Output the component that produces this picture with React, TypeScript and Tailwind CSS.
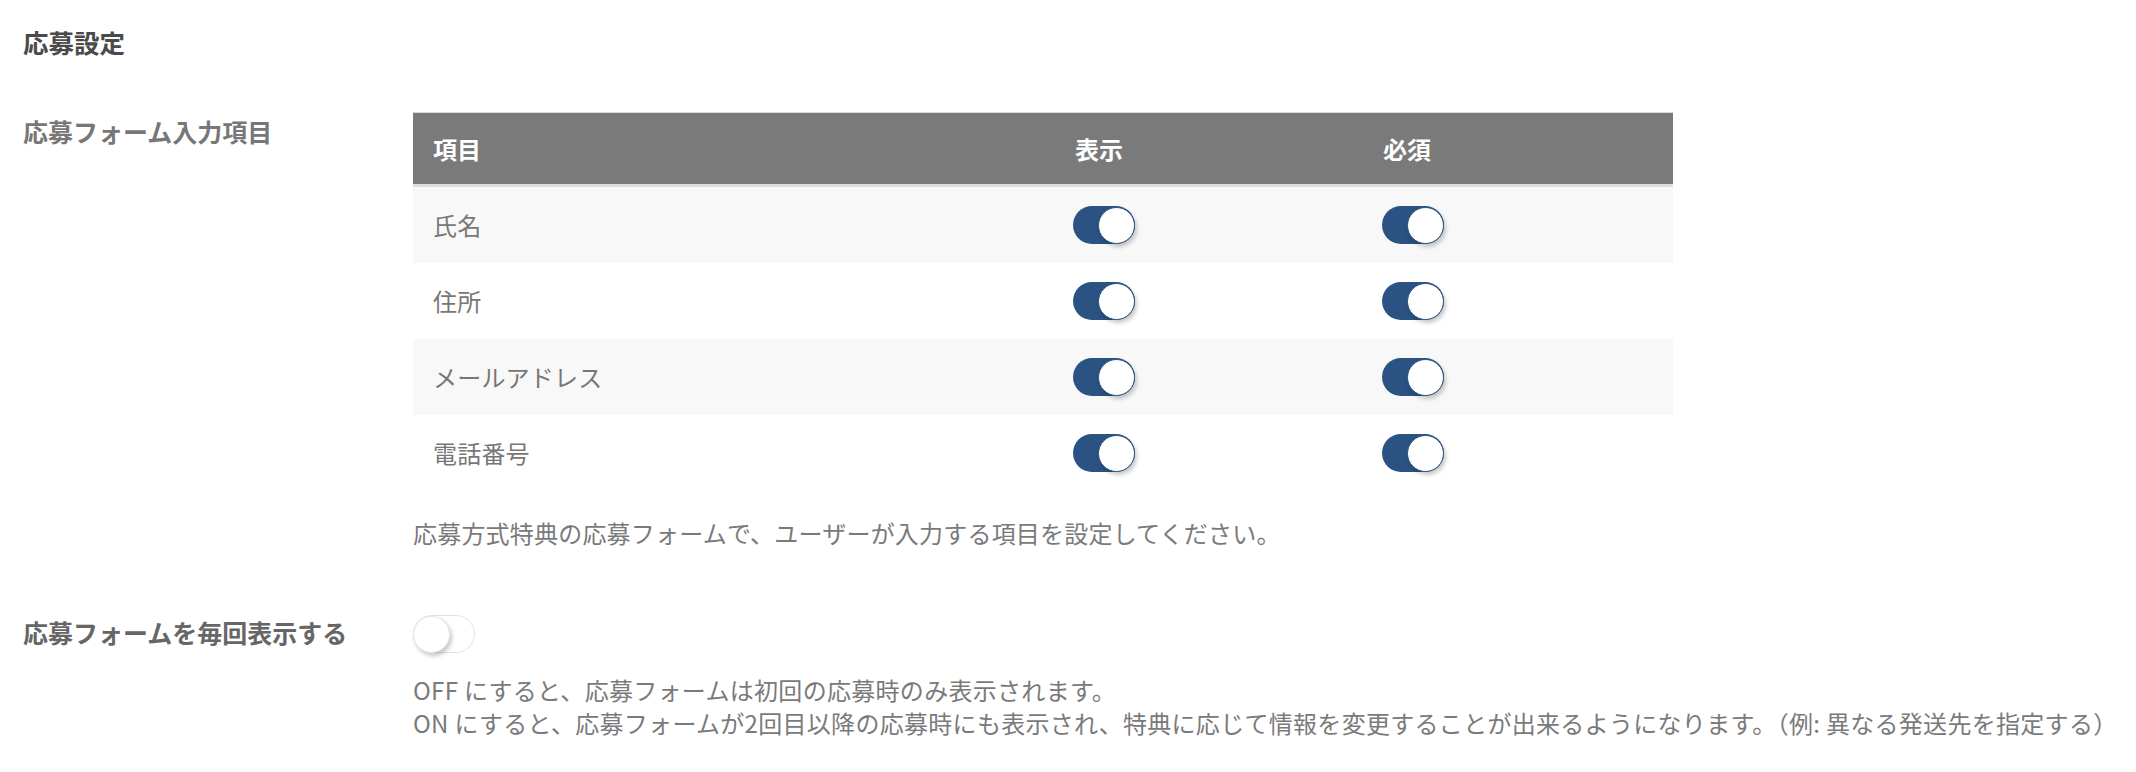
import React, { useState } from 'react';

type Field = { name: string; visible: boolean; required: boolean };

const FIELDS: Field[] = [
  { name: '氏名', visible: true, required: true },
  { name: '住所', visible: true, required: true },
  { name: 'メールアドレス', visible: true, required: true },
  { name: '電話番号', visible: true, required: true },
];

const Toggle: React.FC<{ on: boolean; onChange?: () => void }> = ({ on, onChange }) => (
  <button
    type="button"
    onClick={onChange}
    className={`relative flex items-center w-[62px] h-[38px] rounded-full ${
      on ? 'bg-[#2a5282] justify-end' : 'bg-white border border-[#e2e2e2] justify-start'
    }`}
  >
    <span
      className={`block w-[37px] h-[37px] rounded-full bg-white shadow-[2px_3px_4px_rgba(0,0,0,0.22)] ${
        on ? 'border border-[#2a5282]' : 'border border-[#e6e6e6] -ml-px'
      }`}
    />
  </button>
);

const App: React.FC = () => {
  const [fields, setFields] = useState(FIELDS);
  const [everyTime, setEveryTime] = useState(false);

  const flip = (i: number, key: 'visible' | 'required') =>
    setFields(fields.map((f, j) => (j === i ? { ...f, [key]: !f[key] } : f)));

  return (
    <div className="min-h-screen bg-white pl-[23px] pt-[25px] font-['Noto_Sans_CJK_JP','Noto_Sans',sans-serif]">
      <h2 className="text-[25.5px] leading-[34px] font-bold text-[#4a4a4a]">応募設定</h2>

      {/* 応募フォーム入力項目 */}
      <div className="mt-[53px] flex">
        <div className="w-[390px] shrink-0 pt-[2px] text-[25px] leading-[34px] font-bold text-[#777]">
          応募フォーム入力項目
        </div>
        <div className="flex-1">
          <div className="w-[1260px]">
            <div className="flex h-[75px] items-center bg-[#7a7a7a] border-t border-[#d9d9d9] border-b-[3px] border-b-[#dedede] text-white font-bold text-[24px]">
              <div className="w-[642px] pl-[20px]">項目</div>
              <div className="w-[308px] pl-[20px]">表示</div>
              <div className="flex-1 pl-[20px]">必須</div>
            </div>
            {fields.map((f, i) => (
              <div
                key={f.name}
                className={`flex h-[76px] items-center text-[24px] tracking-[0.2px] text-[#777] ${i % 2 === 0 ? 'bg-[#f8f8f8]' : 'bg-white'}`}
              >
                <div className="w-[642px] pl-[20px]">{f.name}</div>
                <div className="w-[308px] pl-[18px]">
                  <Toggle on={f.visible} onChange={() => flip(i, 'visible')} />
                </div>
                <div className="flex-1 pl-[19px]">
                  <Toggle on={f.required} onChange={() => flip(i, 'required')} />
                </div>
              </div>
            ))}
          </div>
          <p className="mt-[25px] text-[24px] leading-[34px] tracking-[0.2px] text-[#7a7a7a] whitespace-nowrap">
            応募方式特典の応募フォームで、ユーザーが入力する項目を設定してください。
          </p>
        </div>
      </div>

      {/* 応募フォームを毎回表示する */}
      <div className="mt-[65px] flex">
        <div className="w-[390px] shrink-0 text-[25px] leading-[34px] font-bold text-[#666]">
          応募フォームを毎回表示する
        </div>
        <div className="flex-1">
          <Toggle on={everyTime} onChange={() => setEveryTime(!everyTime)} />
          <div className="mt-[20px] text-[24px] leading-[33px] tracking-[0.3px] text-[#7a7a7a] whitespace-nowrap">
            <p>OFF にすると、応募フォームは初回の応募時のみ表示されます。</p>
            <p>ON にすると、応募フォームが2回目以降の応募時にも表示され、特典に応じて情報を変更することが出来るようになります。（例: 異なる発送先を指定する）</p>
          </div>
        </div>
      </div>
    </div>
  );
};

export default App;
